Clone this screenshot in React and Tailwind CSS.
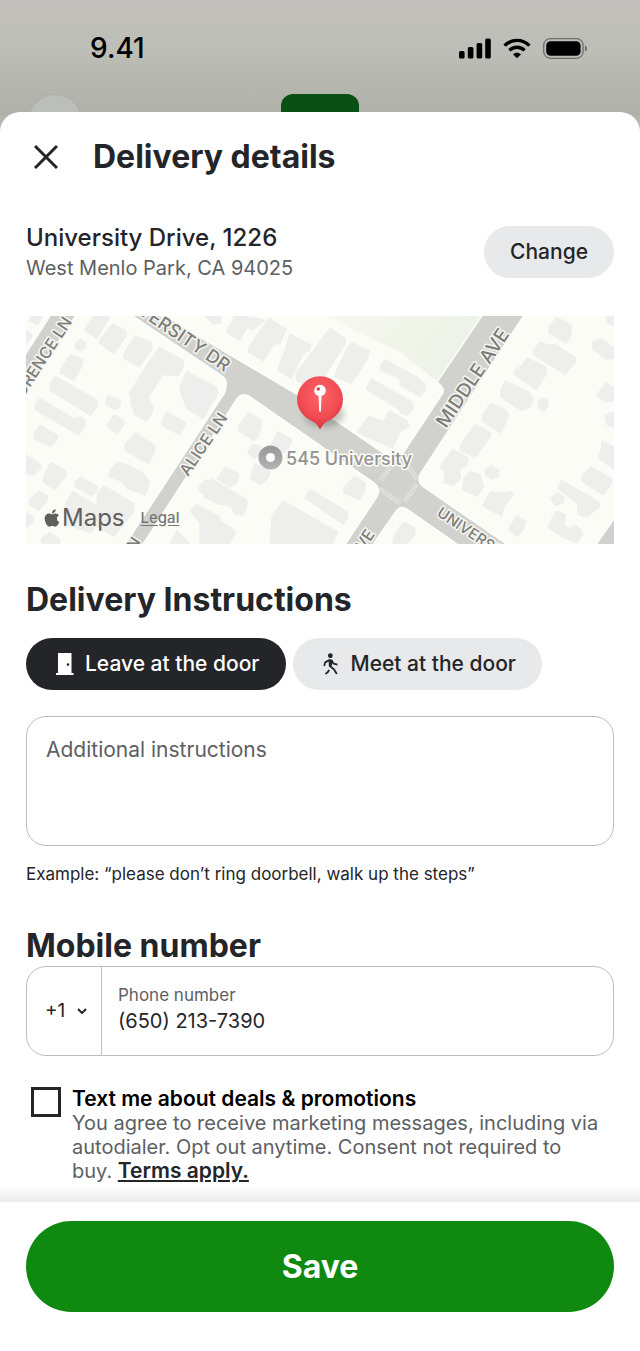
import React from "react";
import { FaApple } from "react-icons/fa";

function SignalIcon() {
  return (
    <svg className="h-[21px] w-8" viewBox="0 0 32 21" aria-hidden="true">
      <rect x="0" y="13" width="5.6" height="7.5" rx="1.6" />
      <rect x="8.8" y="9" width="5.6" height="11.5" rx="1.6" />
      <rect x="17.6" y="5" width="5.6" height="15.5" rx="1.6" />
      <rect x="26.2" y="0.5" width="5.6" height="20" rx="1.6" />
    </svg>
  );
}

function WifiIcon() {
  return (
    <svg className="h-[21px] w-7" viewBox="0 0 28 21" aria-hidden="true">
      <g fill="none" stroke="#000" strokeWidth="3.4">
        <path d="M1.6 7.6C8.6 .6 19.4 .6 26.4 7.6" />
        <path d="M6.4 12.4C10.7 8.2 17.3 8.2 21.6 12.4" />
      </g>
      <path d="M14 20.3 9.9 16.2C12.1 14.1 15.9 14.1 18.1 16.2Z" />
    </svg>
  );
}

function BatteryIcon() {
  return (
    <svg className="h-[21px] w-[45px]" viewBox="0 0 45 21" aria-hidden="true">
      <rect x="0.7" y="0.7" width="39.4" height="19.6" rx="6.5" fill="none" stroke="#000" strokeOpacity=".42" strokeWidth="1.3" />
      <rect x="3.2" y="3.2" width="34.4" height="14.6" rx="4.4" />
      <path d="M42 7.5C44.6 8.2 44.6 12.8 42 13.5Z" fillOpacity=".45" />
    </svg>
  );
}

const westBlocks = [
  "M222 15H265V30L230 88 192 60Z",
  "M278 40 318 62V80L282 132 238 100 240 88Z",
  "M345 76 396 98V118L358 172 312 145 310 132Z",
  "M166 100 180 88 197 98 196 114 182 124 166 116Z",
  "M150 134 188 148V165L162 212 120 190 122 176Z",
  "M105 198 232 270V290L212 318 90 240 92 218Z",
  "M60 264 162 326 182 320 196 330 196 346 176 376 46 300 44 286Z",
  "M60 344 114 376 112 388 94 412 42 386 42 368Z",
  "M18 434 62 462V476L40 496 18 490Z",
  "M92 456 138 482V498L106 540 68 516 72 496Z",
  "M418 112 492 152 490 170 474 198 430 194 384 264 400 290 396 310 380 334 342 314 328 250 384 160Z",
  "M500 184 592 236 594 252 548 326 500 296 478 236Z",
  "M262 254 302 272 300 288 286 300 256 284Z",
  "M282 314 312 332V346L292 372 260 348Z",
  "M440 306 496 336V350L478 374 426 346 426 332Z",
  "M346 368 404 406V426L386 462 314 422 314 404Z",
  "M292 456 324 464 368 488 390 516 376 556 322 536 304 514 266 500 268 482Z",
  "M182 500 232 530 230 546 214 558 164 530 166 512Z",
  "M58 542 84 558 80 574 56 602 28 584 30 566Z",
  "M158 544 240 592 234 640 212 670 132 640 136 580Z",
  "M250 526 342 580V604L282 680 228 648 232 552Z",
  "M18 606 42 622 40 636 18 656Z",
  "M64 700V684L88 666 118 686 120 700Z",
  "M36 15H70L54 44 26 32Z",
  "M18 60 36 74 34 84 18 104Z",
  "M556 508 600 530V578L536 544 538 528Z",
  "M530 582 600 620V670L560 664 510 604Z",
  "M450 700 470 662 510 700Z",
  "M556 15H600V40L584 40Z",
];

const centerBlocks = [
  "M80 60 106 15 196 30 158 60 140 54 120 92 82 70Z",
  "M206 24 260 58 240 100 222 104 190 154 144 126 148 108Z",
  "M270 72 334 104 328 122 310 130 274 206 232 180 254 122Z",
  "M390 54 438 86 436 102 348 240 290 212 288 190Z",
  "M452 96 508 122 504 144 454 222 404 200 410 180Z",
  "M556 148 660 206V236L540 180 542 164Z",
  "M514 206 638 276V296L622 314 498 238Z",
  "M508 318 550 334 568 302 620 330 628 350 600 366 578 416 470 366Z",
  "M0 204 50 232 54 252 8 326 0 320Z",
  "M146 308 186 330 176 380 160 392 114 362 116 346Z",
  "M234 364 276 388 274 402 256 430 210 410Z",
  "M158 402 182 410 180 436 162 446 142 430Z",
  "M164 460 210 484 208 500 182 524 150 506Z",
  "M76 470 118 492 110 520 90 532 50 506Z",
  "M34 506 140 568 142 584 130 618 104 612 92 588 52 582 10 560Z",
  "M0 598 100 656 108 670 90 700H0Z",
  "M330 538 444 606 444 622 430 644 314 564Z",
  "M250 572 414 666 398 700H210L216 616Z",
  "M464 498 496 518 494 548 478 570 430 548 432 530Z",
  "M612 636 640 650 644 672 622 700H578L584 670Z",
  "M10 15H60L62 38 40 42Z",
];

const eastBlocks = [
  "M0 172 76 222 78 238 60 260 0 226Z",
  "M0 256 36 280 38 296 20 318 0 308Z",
  "M470 22 516 46 512 80 500 100 446 70 446 52Z",
  "M420 96 450 106 464 102 528 144 526 160 496 194 400 134 400 120Z",
  "M380 142 436 170 440 190 410 240 342 194 344 180 366 166Z",
  "M316 212 388 246 402 268 390 292 364 302 302 262 302 240Z",
  "M412 278 424 264 442 268 446 286 434 304 416 298Z",
  "M272 278 316 298 328 316 302 370 246 334 248 314Z",
  "M226 342 270 366 272 380 226 442 182 422 182 402Z",
  "M158 416 206 444 200 466 178 480 184 504 158 528 130 516 136 490 120 470Z",
  "M208 484 240 492 252 530 232 560 186 538 192 504Z",
  "M256 478 274 466 298 482 294 502 274 508 256 496Z",
  "M272 544 300 550 334 544 340 556 312 590 306 620 248 588Z",
  "M350 618 378 632 370 660 352 680 324 658Z",
  "M578 96 602 86 642 112V146L616 148 578 118Z",
  "M618 218 642 232V274L614 276 590 254Z",
  "M614 314 642 306V354L620 344Z",
  "M606 392 642 410V478L594 444 602 424Z",
  "M574 470 634 506 634 524 610 556 544 514 548 496Z",
  "M484 510 598 576 600 590 560 622 532 612 534 580 472 536Z",
  "M450 566 470 546 492 560 490 576 468 588Z",
  "M470 602 496 614 494 646 510 656 526 644 546 662 546 676 530 700 484 680 442 650Z",
  "M12 638 44 654 46 672 24 700H0V650Z",
  "M618 15H642V50L624 40Z",
];

function Blocks({ x, shapes }) {
  return (
    <g transform={`translate(${x} 310) scale(.3333)`} fill="#eeeeed" stroke="#eeeeed" strokeWidth="3" strokeLinejoin="round">
      {shapes.map((d) => (
        <path key={d} d={d} />
      ))}
    </g>
  );
}

function StreetMap() {
  return (
    <svg className="block h-auto w-full" viewBox="26 316 588 228" role="img" aria-label="Map of the delivery address">
      <defs>
        <linearGradient id="park" x1="0" x2="1" y1="0" y2="0.3">
          <stop offset="0" stopColor="#f8f9f2" />
          <stop offset=".5" stopColor="#f2f5ea" />
          <stop offset="1" stopColor="#ebf2e7" />
        </linearGradient>
        <radialGradient id="pin" cx=".5" cy=".35" r=".65">
          <stop offset="0" stopColor="#ff6468" />
          <stop offset=".65" stopColor="#f04c52" />
          <stop offset="1" stopColor="#d8333c" />
        </radialGradient>
        <linearGradient id="poi" x1="0" x2="0" y1="0" y2="1">
          <stop offset="0" stopColor="#989898" />
          <stop offset="1" stopColor="#b4b4b4" />
        </linearGradient>
        <filter id="soft" x="-50%" y="-50%" width="200%" height="200%">
          <feGaussianBlur stdDeviation="3" />
        </filter>
      </defs>
      <rect x="26" y="316" width="588" height="228" fill="#fcfcf6" />
      <path d="M325 316H482L438 382 400 352Z" fill="url(#park)" />
      <Blocks x={20} shapes={westBlocks} />
      <Blocks x={200} shapes={centerBlocks} />
      <Blocks x={400} shapes={eastBlocks} />

      <g fill="#d1d2ce" stroke="#fefefb" strokeWidth="3" strokeLinejoin="round" paintOrder="stroke">
        <path d="M52 314H76L24 392V358Z" />
        <path d="M614 520 596 546H616Z" />
        <path d="M131 314H161L200 338 300 397 385 455Q397 463 404 453L443 394Q446 388 438 382L484 314H524L420 473Q415 482 424 488L508 546H461L408 509Q401 504 396 510L371 546H345L377 498Q383 489 374 482L250 396Q242 391 236 399L141 546H125L222 398Q229 389 226 379L222 375Z" />
      </g>
      <g stroke="#f3f3ef" strokeWidth="5" strokeDasharray="1 1.4" opacity=".75">
        <path d="M380 489 400 503" />
        <path d="M381 480 391 466" />
        <path d="M405 501 417 484" />
        <path d="M408 466 417 479" />
      </g>

      <g fontFamily="Inter, sans-serif" fontWeight="500" fill="#7c7c79" stroke="#f6f6f1" strokeWidth="3" strokeLinejoin="round" paintOrder="stroke">
        <text transform="translate(23 398) rotate(-57)" fontSize="16">ORENCE LN</text>
        <text transform="translate(137 313) rotate(34)" fontSize="18">VERSITY DR</text>
        <text transform="translate(188 477) rotate(-56)" fontSize="16">ALICE LN</text>
        <text transform="translate(446 429) rotate(-56)" fontSize="19">MIDDLE AVE</text>
        <text transform="translate(436 515) rotate(34)" fontSize="15">UNIVERSITY DR</text>
        <text transform="translate(358 560) rotate(-56)" fontSize="16">AVE</text>
        <text transform="translate(130 558) rotate(-56)" fontSize="15">LN</text>
        <text x="286" y="465" fontSize="18" fill="#939393" stroke="#fcfcf9">545 University</text>
      </g>

      <circle cx="270.500" cy="457.500" r="12" fill="url(#poi)" />
      <circle cx="270.500" cy="457.500" r="4.500" fill="#fff" />
      <ellipse cx="324" cy="414" rx="20" ry="13" fill="#000" opacity=".22" filter="url(#soft)" />
      <path d="M320 429.500C318 425 315 422 310 420A23 23 0 1 1 330 420C325 422 322 425 320 429.500Z" fill="url(#pin)" />
      <path d="M318.500 394H321.500L321 411Q320.100 413 319.200 411Z" fill="#fff" />
      <circle cx="320" cy="390.500" r="5.800" fill="#fff" />
      <circle cx="318.300" cy="389" r="1.800" fill="#e9474e" />
    </svg>
  );
}

function DoorIcon() {
  return (
    <svg className="h-[22px] w-[18px]" viewBox="0 0 18 22" fill="currentColor" aria-hidden="true">
      <path fillRule="evenodd" d="M2 0H15.500V20H17.500V22H0V20H2ZM12 10.300A1.300 1.300 0 1 0 12 12.900A1.300 1.300 0 1 0 12 10.300Z" />
    </svg>
  );
}

function WalkIcon() {
  return (
    <svg className="h-[22px] w-4" viewBox="130 97 48 68" aria-hidden="true">
      <circle cx="152" cy="105.500" r="7.500" fill="currentColor" />
      <g fill="none" stroke="currentColor" strokeWidth="5.500" strokeLinejoin="round">
        <path d="M133 137 136 126 149 119 156 120 162 130 174 133" />
        <path d="M155 120 151 138 163 147 172 162" />
        <path d="M148 149 145 155 137 162" />
      </g>
      <path d="M147 118 160 120 155 140 147 137Z" fill="currentColor" />
    </svg>
  );
}

function SectionTitle({ children }) {
  return <h2 className="text-[32px] leading-10 font-bold">{children}</h2>;
}

export default function App() {
  return (
    <div className="bg-[#b2b3aa] bg-[linear-gradient(#c2c0bc_0px,#bdbeb7_50px,#afb0a7_112px,#c4c4be_140px)] font-['Inter','Liberation_Sans',sans-serif] text-[#242529]">
      <header className="flex h-[94px] items-center justify-between pt-[2px] pr-[52px] pl-[90px] text-black">
        <time className="text-[28px] leading-8 font-medium">9.41</time>
        <div className="flex items-center gap-3">
          <SignalIcon />
          <WifiIcon />
          <BatteryIcon />
        </div>
      </header>
      <div className="grid h-[18px] grid-cols-3 overflow-hidden" aria-hidden="true">
        <div className="ml-7 size-[54px] rounded-full border border-[#abafad] bg-[#bcbeb9]" />
        <div className="h-10 w-[78px] justify-self-center rounded-xl bg-[#0a5014]" />
      </div>

      <main className="rounded-t-[20px] bg-white">
        <div className="px-[26px]">
          <div className="flex h-[90px] items-center gap-[35px]">
            <button type="button" aria-label="Close" className="ml-2">
              <svg className="size-6" viewBox="0 0 24 24" fill="none" stroke="currentColor" strokeWidth="3" aria-hidden="true">
                <path d="M1 1 23 23M23 1 1 23" />
              </svg>
            </button>
            <h1 className="text-[32px] leading-10 font-bold">Delivery details</h1>
          </div>

          <section className="mt-5 flex items-center justify-between">
            <address className="not-italic">
              <p className="text-2xl leading-8 font-medium">University Drive, 1226</p>
              <p className="text-xl leading-7 text-[#5d5f63]">West Menlo Park, CA 94025</p>
            </address>
            <button type="button" className="h-[52px] rounded-full bg-[#e8e9eb] px-[26px] text-[21px] font-medium">Change</button>
          </section>

          <div className="relative mt-[34px]">
            <StreetMap />
            <div className="absolute bottom-3 left-4 flex items-center text-[#5f5f5d]">
              <FaApple className="size-5" aria-hidden="true" />
              <span className="text-[24px] leading-7">Maps</span>
              <a href="#legal" className="ml-4 text-[15px] font-medium text-[#777774] underline underline-offset-2">Legal</a>
            </div>
          </div>

          <section className="mt-9">
            <SectionTitle>Delivery Instructions</SectionTitle>
            <div className="mt-[18px] flex gap-[7px] text-[21px] font-medium">
              <button type="button" aria-pressed="true" className="flex h-[52px] items-center gap-[11px] rounded-full bg-[#242529] pr-[26px] pl-[30px] text-white">
                <DoorIcon />
                Leave at the door
              </button>
              <button type="button" aria-pressed="false" className="flex h-[52px] items-center gap-3 rounded-full bg-[#e8e9eb] pr-[26px] pl-[30px]">
                <WalkIcon />
                Meet at the door
              </button>
            </div>
            <textarea
              aria-label="Additional instructions"
              placeholder="Additional instructions"
              className="mt-[26px] block h-[130px] w-full resize-none rounded-[20px] border border-[#bcbdbf] bg-white px-[19px] py-[17px] text-[21px] leading-8 placeholder:text-[#5d5f63]"
            />
            <p className="mt-4 text-[17px] leading-6">Example: “please don’t ring doorbell, walk up the steps”</p>
          </section>

          <section className="mt-10">
            <SectionTitle>Mobile number</SectionTitle>
            <div className="flex h-[90px] rounded-[20px] border border-[#bcbdbf]">
              <div className="relative flex items-center border-r border-[#bcbdbf]">
                <select aria-label="Country code" className="h-full w-[74px] appearance-none rounded-l-[19px] bg-transparent pl-[18px] text-[19px]">
                  <option>+1</option>
                </select>
                <svg className="pointer-events-none absolute right-[14px] h-[6px] w-[10px]" viewBox="0 0 10 6" fill="none" stroke="currentColor" strokeWidth="2" aria-hidden="true">
                  <path d="M1 1 5 5 9 1" />
                </svg>
              </div>
              <div className="flex min-w-0 flex-1 flex-col justify-center px-4 pb-1">
                <label htmlFor="phone" className="text-[17px] leading-6 text-[#5d5f63]">Phone number</label>
                <input id="phone" type="tel" defaultValue="(650) 213-7390" className="w-full rounded-r-[18px] bg-transparent text-xl leading-7" />
              </div>
            </div>
          </section>

          <section className="mt-[31px] flex gap-[11px] pb-[3px] pl-[5px]">
            <input id="promo" type="checkbox" className="size-[30px] shrink-0 appearance-none border-3 border-[#242529] checked:bg-[#242529]" />
            <div className="pr-2 text-xl leading-6">
              <label htmlFor="promo" className="block text-[21px] leading-6 font-semibold text-black">Text me about deals &amp; promotions</label>
              <p className="text-[#5d5f63]">
                You agree to receive marketing messages, including via autodialer. Opt out anytime. Consent not required to buy.{" "}
                <a href="#terms" className="text-[21px] leading-6 font-semibold text-[#242529] underline underline-offset-2">Terms apply.</a>
              </p>
            </div>
          </section>
        </div>

        <div className="h-4 bg-linear-to-b from-white to-[#ebebeb]" />
        <footer className="bg-white px-[26px] pt-[19px] pb-[39px]">
          <button type="button" className="h-[91px] w-full rounded-full bg-[#108910] text-[32px] font-bold text-white">Save</button>
        </footer>
      </main>
    </div>
  );
}
